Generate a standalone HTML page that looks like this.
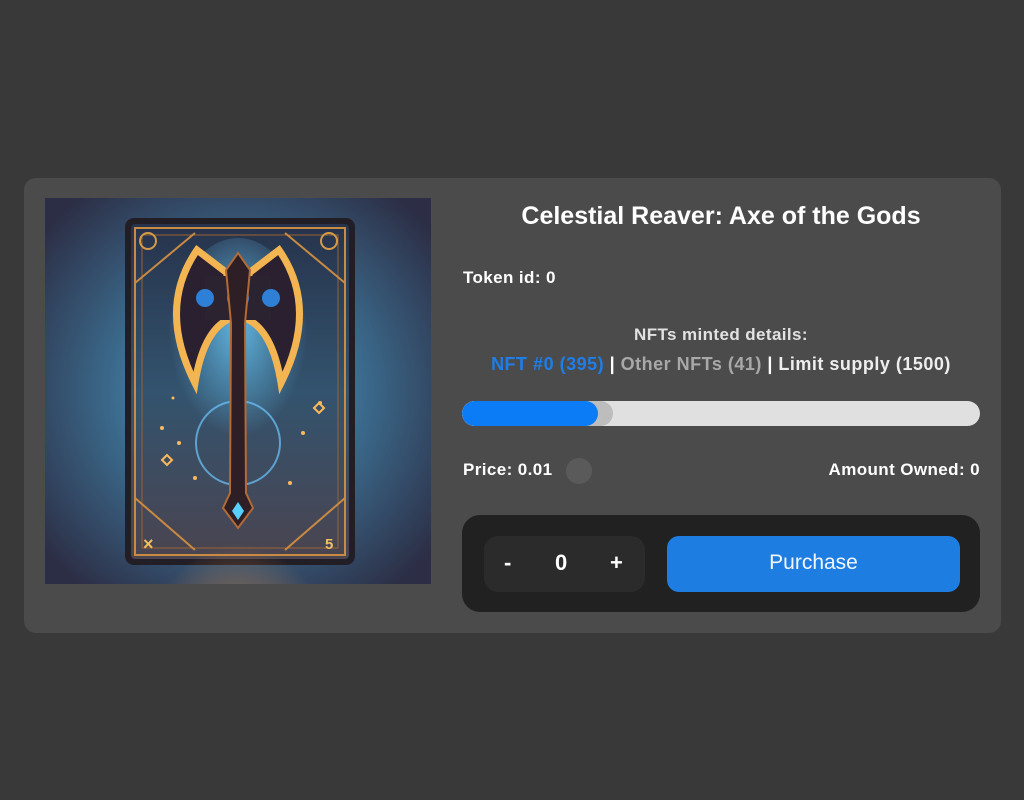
<!DOCTYPE html>
<html><head><meta charset="utf-8"><style>
*{margin:0;padding:0;box-sizing:border-box}
body{width:1024px;height:800px;background:#393939;font-family:"Liberation Sans",sans-serif;font-weight:bold;color:#fff;position:relative;overflow:hidden}
.panel{position:absolute;left:24px;top:178px;width:977px;height:455px;background:#4b4b4b;border-radius:12px}
.img{position:absolute;left:45px;top:198px;width:386px;height:386px}
.t{position:absolute;white-space:nowrap}
.title{left:462px;width:518px;text-align:center;top:202px;font-size:25px;font-weight:bold}
.s{font-size:17px;letter-spacing:0.4px}
.bar{position:absolute;left:462px;top:401px;width:518px;height:25px;border-radius:13px;background:#e0e0e0;overflow:hidden}
.bar .g{position:absolute;left:0;top:0;width:151px;height:25px;border-radius:13px;background:#bdbdbd}
.bar .b{position:absolute;left:0;top:0;width:136px;height:25px;border-radius:13px;background:#0b7cf5}
.ctl{position:absolute;left:462px;top:515px;width:518px;height:97px;background:#212121;border-radius:18px}
.qty{position:absolute;left:22px;top:21px;width:161px;height:56px;background:#2b2b2b;border-radius:14px;font-size:22px}
.buy{position:absolute;left:205px;top:21px;width:293px;height:56px;background:#1e7de0;border-radius:12px;font-size:21px;font-weight:normal;text-align:center;line-height:54px;color:#f2f6ff}
</style></head><body>
<div class="panel"></div>
<svg class="img" viewBox="0 0 386 386" xmlns="http://www.w3.org/2000/svg">
<defs>
<radialGradient id="bg" cx="50%" cy="50%" r="65%"><stop offset="0" stop-color="#5ab8e4"/><stop offset=".5" stop-color="#3b6a8c"/><stop offset="1" stop-color="#2c2e45"/></radialGradient>
<linearGradient id="cd" x1="0" y1="0" x2="0" y2="1"><stop offset="0" stop-color="#27334c"/><stop offset=".5" stop-color="#33536e"/><stop offset="1" stop-color="#4a4450"/></linearGradient>
<radialGradient id="glow" cx="50%" cy="100%" r="55%"><stop offset="0" stop-color="#ffc76a"/><stop offset=".5" stop-color="#d98a45" stop-opacity=".6"/><stop offset="1" stop-color="#d98a45" stop-opacity="0"/></radialGradient>
<radialGradient id="bl" cx="50%" cy="40%" r="50%"><stop offset="0" stop-color="#6cd0ff" stop-opacity=".8"/><stop offset="1" stop-color="#6cd0ff" stop-opacity="0"/></radialGradient>
</defs>
<rect width="386" height="386" fill="url(#bg)"/>
<rect x="80" y="20" width="230" height="347" rx="9" fill="#221e26"/>
<rect x="86" y="26" width="218" height="335" rx="4" fill="url(#cd)"/>
<ellipse cx="193" cy="150" rx="70" ry="110" fill="url(#bl)"/>
<ellipse cx="193" cy="361" rx="100" ry="150" fill="url(#glow)"/>
<rect x="90" y="30" width="210" height="327" fill="none" stroke="#c98a42" stroke-width="2"/>
<rect x="97" y="37" width="196" height="313" fill="none" stroke="#9a6230" stroke-width="1"/>
<path d="M90 300 L150 352 M300 300 L240 352 M90 85 L150 35 M300 85 L240 35" stroke="#c98a42" stroke-width="2"/>
<circle cx="193" cy="245" r="42" fill="none" stroke="#6cc6ff" stroke-width="2" opacity=".7"/>
<path d="M152 52 Q112 110 150 185 Q158 135 182 122 L182 75 Z" fill="#2a2030" stroke="#f3b452" stroke-width="7"/>
<path d="M234 52 Q274 110 236 185 Q228 135 204 122 L204 75 Z" fill="#2a2030" stroke="#f3b452" stroke-width="7"/>
<path d="M160 78 L226 78 L226 122 L160 122 Z" fill="#2b2330"/>
<circle cx="160" cy="100" r="9" fill="#2e7fd6"/><circle cx="193" cy="100" r="11" fill="#2e7fd6"/><circle cx="226" cy="100" r="9" fill="#2e7fd6"/>
<path d="M193 55 L205 72 L200 125 L201 295 L208 310 L193 330 L178 310 L185 295 L186 125 L181 72 Z" fill="#2d1f25" stroke="#b26a36" stroke-width="2"/>
<path d="M193 304 L199 313 L193 322 L187 313 Z" fill="#58d0ff"/>
<circle cx="103" cy="43" r="8" fill="none" stroke="#d39a48" stroke-width="2"/>
<circle cx="284" cy="43" r="8" fill="none" stroke="#d39a48" stroke-width="2"/>
<g fill="#ffb85a"><circle cx="117" cy="230" r="2"/><circle cx="134" cy="245" r="2"/><circle cx="258" cy="235" r="2"/><circle cx="275" cy="205" r="2"/><circle cx="150" cy="280" r="2"/><circle cx="245" cy="285" r="2"/><circle cx="128" cy="200" r="1.5"/></g>
<g fill="none" stroke="#ffb85a" stroke-width="2"><path d="M117 262 l5 -5 l5 5 l-5 5 z"/><path d="M269 210 l5 -5 l5 5 l-5 5 z"/></g>
<text x="98" y="352" font-size="18" fill="#f0c060">×</text><text x="280" y="351" font-size="15" fill="#f0c060">5</text>
</svg>
<div class="t title">Celestial Reaver: Axe of the Gods</div>
<div class="t s" style="left:463px;top:268px">Token id: 0</div>
<div class="t s" style="left:462px;width:518px;text-align:center;top:325px;color:#e2e2e2">NFTs minted details:</div>
<div class="t" style="left:452px;width:538px;text-align:center;top:354px;font-size:18px;letter-spacing:0.5px"><span style="color:#1f7de8">NFT #0 (395)</span> | <span style="color:#a8a8a8">Other NFTs (41)</span> | <span style="color:#eee">Limit supply (1500)</span></div>
<div class="bar"><div class="g"></div><div class="b"></div></div>
<div class="t s" style="left:463px;top:460px">Price: 0.01</div>
<div style="position:absolute;left:566px;top:458px;width:26px;height:26px;border-radius:13px;background:#5a5a5a"></div>
<div class="t s" style="right:44px;top:460px">Amount Owned: 0</div>
<div class="ctl">
<div class="qty"><span class="t" style="left:20px;top:14px">-</span><span class="t" style="left:71px;top:14px">0</span><span class="t" style="left:126px;top:14px">+</span></div>
<div class="buy">Purchase</div>
</div>
</body></html>
